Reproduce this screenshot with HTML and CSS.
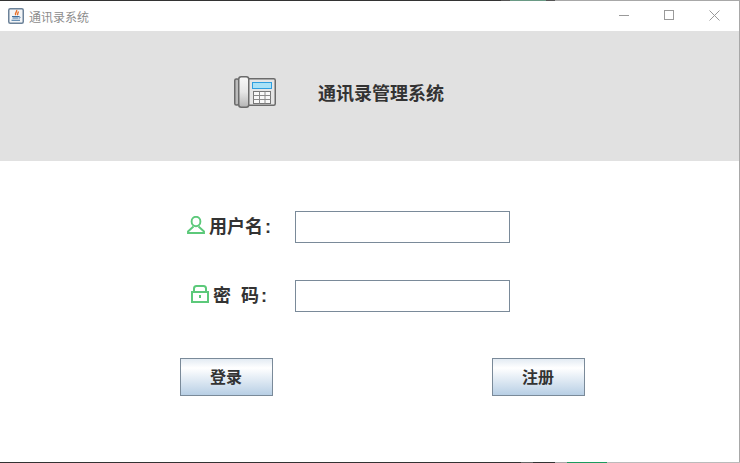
FILE: index.html
```html
<!DOCTYPE html>
<html lang="zh-CN">
<head>
    <meta charset="UTF-8">
    <meta name="viewport" content="width=device-width, initial-scale=1.0">
    <title>通讯录系统</title>
    <link rel="stylesheet" href="styles.css">
</head>
<body>
    <div class="window">
        <div class="edge edge-top"></div>

        <!-- 标题栏 -->
        <div class="titlebar">
            <svg class="app-icon" width="16" height="16" viewBox="0 0 16 16">
                <rect x="0.75" y="0.75" width="14.5" height="14.5" rx="1.5" fill="#f3f5f7" stroke="#6c8299" stroke-width="1.5"/>
                <path d="M8.5 2c1.2 1.800-2.200 2.800-.8 5.200M10.200 3.500c.6 1.200-1.400 2-.4 3.700" fill="none" stroke="#e8702a" stroke-width="1.400"/>
                <path d="M4 8.500h7M4.500 10h6M3.500 12.300h8.500" fill="none" stroke="#3d6f9e" stroke-width="1.100"/>
                <path d="M11 8.500c1.500 0 1.500 1.800 0 1.800" fill="none" stroke="#3d6f9e" stroke-width="0.800"/>
            </svg>
            <span class="title-text">通讯录系统</span>
            <div class="win-controls">
                <svg width="10" height="10" viewBox="0 0 10 10"><path d="M0 5.500h10" stroke="#9a9a9a"/></svg>
                <svg width="10" height="10" viewBox="0 0 10 10"><rect x="0.500" y="0.500" width="9" height="9" fill="none" stroke="#9a9a9a"/></svg>
                <svg width="11" height="11" viewBox="0 0 11 11"><path d="M.5.500l10 10M10.500.500l-10 10" stroke="#9a9a9a"/></svg>
            </div>
        </div>

        <!-- 顶部横幅 -->
        <div class="banner">
            <svg class="phone-icon" width="42" height="32" viewBox="0 0 42 32">
                <defs>
                    <linearGradient id="handset" x1="0" x2="0" y1="0" y2="1">
                        <stop offset="0" stop-color="#f8f8f8"/>
                        <stop offset="0.5" stop-color="#e6e6e6"/>
                        <stop offset="1" stop-color="#b4b4b4"/>
                    </linearGradient>
                </defs>
                <rect x="13" y="2.750" width="28.250" height="26.500" rx="1.500" fill="#e6e6e6" stroke="#6b6b6b" stroke-width="1.500"/>
                <rect x="0.750" y="3" width="4" height="26" rx="1.500" fill="#bcbcbc" stroke="#6b6b6b" stroke-width="1.500"/>
                <rect x="4.750" y="0.750" width="10" height="30.500" rx="2.500" fill="url(#handset)" stroke="#6b6b6b" stroke-width="1.500"/>
                <rect x="18.500" y="6.500" width="19" height="6" fill="#a9e2f7" stroke="#2f9fe0"/>
                <rect x="19.500" y="15.500" width="17" height="12" fill="#f8f8f8" stroke="#777"/>
                <path d="M25.500 15.500v12M31 15.500v12M19.500 19.500h17M19.500 23.500h17" stroke="#8a8a8a" fill="none"/>
            </svg>
            <h1 class="banner-title">通讯录管理系统</h1>
        </div>

        <!-- 登录表单 -->
        <form class="login-form">
            <div class="form-row">
                <label class="field-label">
                    <svg width="18" height="18" viewBox="0 0 18 18">
                        <ellipse cx="9" cy="5.500" rx="4.400" ry="4.700" fill="none" stroke="#5cc97a" stroke-width="1.900"/>
                        <path d="M6.500 10.500L1 15.500V17h16v-1.500L11.500 10.500" fill="none" stroke="#5cc97a" stroke-width="1.900"/>
                    </svg>
                    <span>用户名<span class="colon">:</span></span>
                </label>
                <input class="text-input" type="text">
            </div>
            <div class="form-row">
                <label class="field-label pass-label">
                    <svg width="18" height="18" viewBox="0 0 18 18">
                        <rect x="1" y="7" width="16" height="10" fill="none" stroke="#5cc97a" stroke-width="2"/>
                        <path d="M3 6.500V3.500C3 2 4 1 5.500 1h7C14 1 15 2 15 3.500v3" fill="none" stroke="#5cc97a" stroke-width="2"/>
                        <rect x="8" y="10" width="2" height="3" fill="#5cc97a"/>
                    </svg>
                    <span>密&nbsp;&nbsp;码<span class="colon">:</span></span>
                </label>
                <input class="text-input" type="password">
            </div>
            <div class="form-actions">
                <button class="btn" type="button">登录</button>
                <button class="btn" type="button">注册</button>
            </div>
        </form>

        <div class="edge edge-bottom"></div>
    </div>
</body>
</html>
```

FILE: styles.css
```css
* {
    box-sizing: border-box;
}
body {
    margin: 0;
    font-family: "Liberation Sans", "Noto Sans CJK SC", sans-serif;
    background: white;
}
.window {
    display: flex;
    flex-direction: column;
    width: 740px;
    height: 463px;
    background: white;
    border-right: 1px solid #a8a8a8;
}
/* 窗口上下边缘露出的桌面 */
.edge {
    flex: none;
    width: 740px;
    height: 1px;
}
.edge-top {
    background: linear-gradient(to right, #333 501px, #555 501px, #555 510px, #6a9a85 510px, #6a9a85 546px, #555 546px, #555 555px, #a8a8a8 555px);
}
.edge-bottom {
    margin-top: auto;
    background: linear-gradient(to right, #333 521px, #666 521px, #666 533px, #333 533px, #333 555px, #a8a8a8 555px, #a8a8a8 567px, #1d9a5e 567px, #1d9a5e 607px, #bbb 607px);
}
.titlebar {
    display: flex;
    align-items: center;
    height: 30px;
    padding-left: 8px;
}
.app-icon {
    margin-right: 5px;
}
.title-text {
    font-size: 12px;
    color: #8c8c8c;
}
.win-controls {
    display: flex;
    align-items: center;
    gap: 35px;
    margin-left: auto;
    margin-right: 19px;
    margin-bottom: 2px;
}
.banner {
    display: flex;
    align-items: center;
    height: 130px;
    padding-left: 234px;
    padding-bottom: 8px;
    background: #e1e1e1;
}
.phone-icon {
    margin-right: 42px;
}
.banner-title {
    margin: 0;
    font-size: 18px;
    font-weight: bold;
    color: #333;
}
.login-form {
    display: flex;
    flex-direction: column;
    padding-top: 50px;
}
.form-row {
    display: flex;
    align-items: center;
    margin-bottom: 37px;
    padding-left: 187px;
}
.field-label {
    display: flex;
    align-items: center;
    gap: 4px;
    width: 108px;
    padding-bottom: 4px;
    font-size: 18px;
    font-weight: bold;
    color: #333;
}
.pass-label {
    padding-left: 4px;
}
.colon {
    margin-left: 2px;
}
.text-input {
    width: 215px;
    height: 32px;
    border: 1px solid #7a8a99;
    background: white;
}
.form-actions {
    display: flex;
    justify-content: space-between;
    width: 405px;
    margin-left: 180px;
    margin-top: 9px;
}
.btn {
    width: 93px;
    height: 38px;
    padding: 0 1px 2px 0;
    border: 1px solid #7a8a99;
    background: linear-gradient(to bottom, #e3ebf3 0%, #ffffff 25%, #b8cfe5 100%);
    font-family: inherit;
    font-size: 16px;
    font-weight: bold;
    color: #333;
}
```
